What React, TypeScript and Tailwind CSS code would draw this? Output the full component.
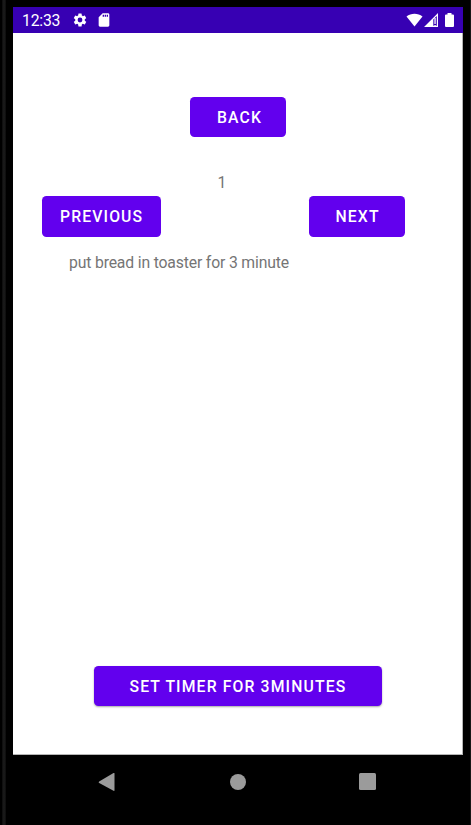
import type { ReactNode } from "react";

function MaterialButton({ children, className }: { children: ReactNode; className: string }) {
  return (
    <button
      className={`flex h-[40.5px] items-center rounded-[4.5px] bg-[#6200ee] pt-[2px] text-[15.75px] font-medium tracking-[1.13px] whitespace-nowrap text-white ${className}`}
    >
      {children}
    </button>
  );
}

function StatusBar() {
  return (
    <header className="flex h-[26px] shrink-0 items-center bg-[#3700b3] pl-[9px] text-white">
      <span className="w-[50px] pt-[2px] text-[15.75px] leading-none tracking-[-0.2px]">12:33</span>
      <svg className="size-4" viewBox="0 0 24 24" fill="currentColor">
        <path d="M19.14 12.94c.04-.3.06-.61.06-.94s-.02-.64-.07-.94l2.03-1.58a.49.49 0 0 0 .12-.61l-1.92-3.32a.49.49 0 0 0-.59-.22l-2.39.96a7 7 0 0 0-1.62-.94l-.36-2.54a.48.48 0 0 0-.48-.41h-3.84a.48.48 0 0 0-.47.41l-.36 2.54c-.59.24-1.13.57-1.62.94l-2.39-.96a.49.49 0 0 0-.59.22L2.74 8.87a.48.48 0 0 0 .12.61l2.03 1.58a7.5 7.5 0 0 0 0 1.88l-2.03 1.58a.49.49 0 0 0-.12.61l1.92 3.32c.12.22.37.29.59.22l2.39-.96c.5.38 1.03.7 1.62.94l.36 2.54c.05.24.24.41.48.41h3.84c.24 0 .44-.17.47-.41l.36-2.54a7 7 0 0 0 1.62-.94l2.39.96c.22.08.47 0 .59-.22l1.92-3.32a.48.48 0 0 0-.12-.61zM12 15.6a3.6 3.6 0 1 1 0-7.2 3.6 3.6 0 0 1 0 7.2z" />
      </svg>
      <svg className="ml-2 size-4" viewBox="0 0 24 24" fill="currentColor">
        <path d="M18 2h-8L4 8v12c0 1.100.9 2 2 2h12c1.100 0 2-.9 2-2V4c0-1.100-.9-2-2-2zm-6 5h-2V4h2v3zm3 0h-2V4h2v3zm3 0h-2V4h2v3z" />
      </svg>
      <svg className="ml-auto h-[14px] w-[17px]" viewBox="0 0 17 14" fill="currentColor">
        <path d="M.5 3.500C5 -.3 12 -.3 16.500 3.500L8.500 13.500Z" />
      </svg>
      <svg className="ml-px h-[14px] w-[14px]" viewBox="0 0 14 14" fill="currentColor">
        <path fillRule="evenodd" d="M0 14 14 0V14ZM9.300 6.500V12.800H12.800V3Z" />
        <path d="M10.400 5h1.300v6h-1.300zM10.400 12h1.300v1.200h-1.300z" />
      </svg>
      <svg className="mr-[9px] ml-[7px] h-[14px] w-[9px]" viewBox="0 0 9 14" fill="currentColor">
        <path d="M2.500 0H6.500V1.400H8Q9 1.400 9 2.400V13Q9 14 8 14H1Q0 14 0 13V2.400Q0 1.400 1 1.400H2.500Z" />
      </svg>
    </header>
  );
}

function NavigationBar() {
  return (
    <nav className="flex h-[53px] items-center pl-[92px] text-[#9b9b9b]">
      <svg className="h-[18px] w-[17px]" viewBox="0 0 17 18" fill="currentColor">
        <path d="M15.500 0Q16.500-.3 16.500 .8V17.200Q16.500 18.300 15.500 17.800L1.200 10Q.2 9.200 1.200 8.400Z" />
      </svg>
      <span className="ml-[114.500px] size-4 rounded-full bg-current" />
      <span className="ml-[113.500px] size-[17px] rounded-[1.500px] bg-current" />
    </nav>
  );
}

export default function App() {
  return (
    <div className="flex h-[825px] w-[471px] overflow-hidden bg-black font-[Roboto,sans-serif]">
      <div className="ml-[2px] w-[4px] shrink-0 bg-linear-to-r from-[#0c0c0c] via-[#1d1d1d] to-[#0c0c0c]" />
      <div className="flex w-[457px] shrink-0 flex-col pt-[7px]">
        <div className="ml-[7px] flex h-[748px] flex-col">
          <StatusBar />
          <main className="flex grow flex-col border-r border-b border-[#b5b5b5] bg-white text-[15.750px] text-[#757575]">
            <MaterialButton className="mt-[63.500px] ml-[177px] w-[96px] pl-[27px]">BACK</MaterialButton>
            <p className="mt-[37px] ml-[204.500px] leading-[18px]">1</p>
            <div className="mt-[4px] flex pl-[29px]">
              <MaterialButton className="w-[118.500px] pl-[18px]">PREVIOUS</MaterialButton>
              <MaterialButton className="ml-[148px] w-[96.500px] pl-[27px]">NEXT</MaterialButton>
            </div>
            <p className="mt-[17px] ml-[56px] leading-[18px] tracking-[-0.160px]">put bread in toaster for 3 minute</p>
            <MaterialButton className="mt-auto mb-[48px] ml-[80.500px] w-[288.500px] pl-[36px] shadow-[0_1px_2px_rgba(0,0,0,0.35)]">
              SET TIMER FOR 3MINUTES
            </MaterialButton>
          </main>
        </div>
        <NavigationBar />
      </div>
      <div className="ml-auto w-px bg-[#171717]" />
    </div>
  );
}
